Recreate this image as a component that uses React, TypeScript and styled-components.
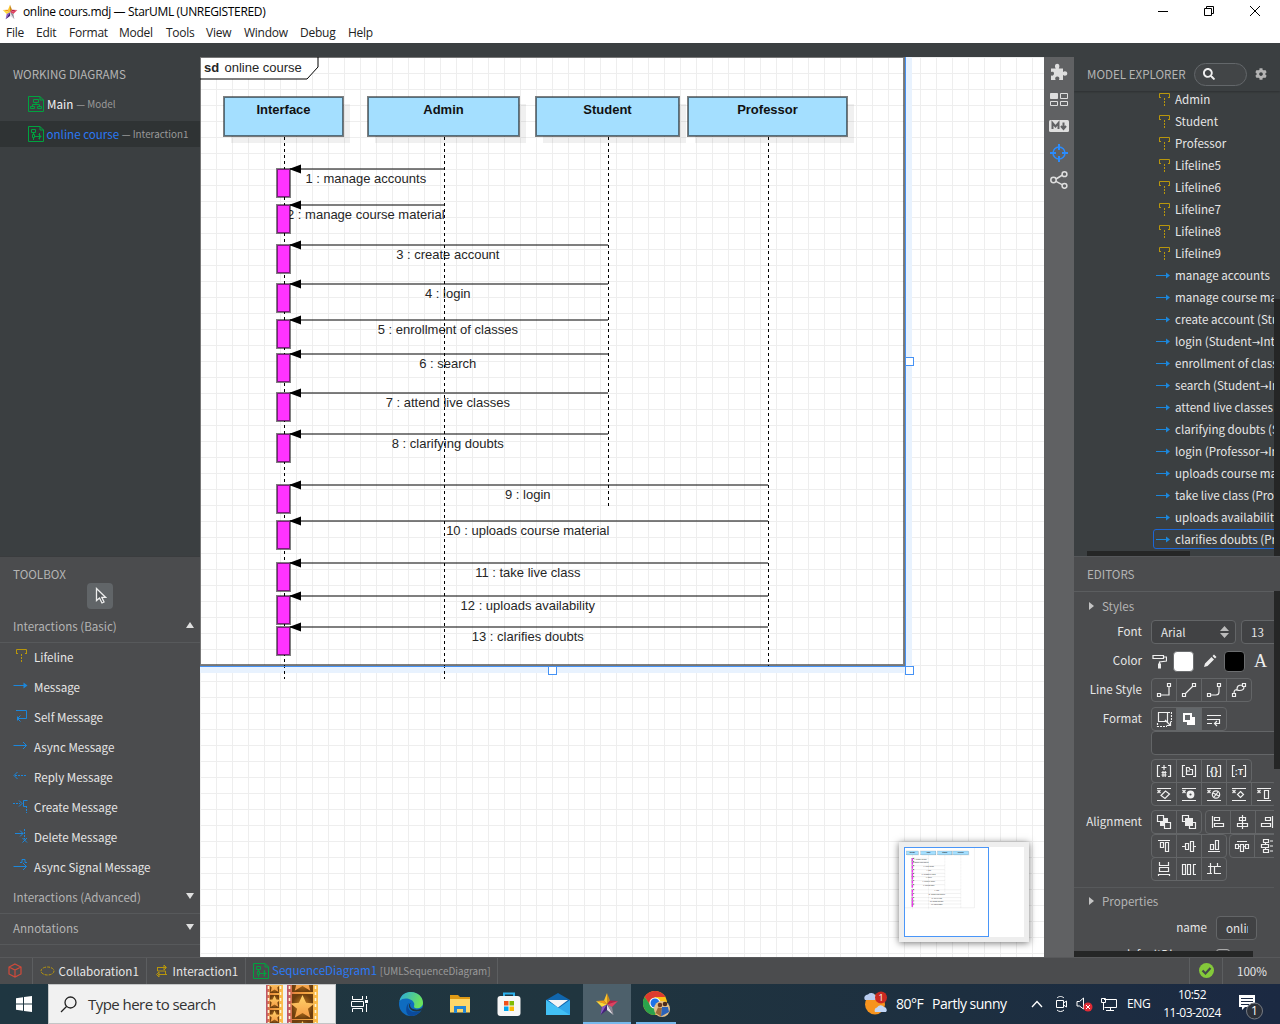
import React from "react";
import styled, { createGlobalStyle, css } from "styled-components";
import { FaSearch, FaCog } from "react-icons/fa";

const ui = `"Noto Sans CJK SC", "Open Sans", sans-serif`;
const segoe = `"Open Sans", "Noto Sans", sans-serif`;

const Global = createGlobalStyle`
  * { box-sizing: border-box; }
  body { margin: 0; background: #3b3f41; overflow: hidden; }
  svg { display: block; flex: none; }
`;

const Screen = styled.div`
  width: 1280px;
  height: 1024px;
  display: flex;
  flex-direction: column;
  overflow: hidden;
  font: 11.6px/20px ${ui};
  color: #e6e6e6;
  white-space: nowrap;
`;

/* ---------- window chrome ---------- */
const TitleBar = styled.header`
  height: 22px;
  display: flex;
  align-items: center;
  padding: 1px 20px 0 2px;
  background: #fff;
  color: #000;
  font: 12px/20px ${segoe};
  letter-spacing: -0.35px;
`;
const TitleText = styled.span`
  flex: 1;
  margin-left: 5px;
`;
const WindowButtons = styled.div`
  display: flex;
  gap: 36px;
  margin-top: -1px;
`;
const MenuBar = styled.nav`
  height: 21px;
  display: flex;
  background: #fff;
  color: #222;
  font: 12px/21px ${segoe};
`;
const MenuItem = styled.span<{ $w: number }>`
  width: ${(p) => p.$w}px;
  padding-left: 6px;
  letter-spacing: -0.25px;
`;
const Body = styled.main`
  height: 914px;
  padding-top: 14px;
  display: flex;
  background: #3b3f41;
`;

/* ---------- left ---------- */
const LeftBar = styled.aside`
  width: 200px;
  display: flex;
  flex-direction: column;
`;
const Working = styled.section`
  height: 499px;
`;
const PanelTitle = styled.h2`
  margin: 0;
  padding: 7px 0 0 13px;
  font: 11.6px/20px ${ui};
  color: #b4b4b4;
`;
const DiagramRow = styled.div<{ $on?: boolean }>`
  height: 26px;
  margin-top: ${(p) => (p.$on ? 4 : 7)}px;
  padding-left: 28px;
  display: flex;
  align-items: center;
  gap: ${(p) => (p.$on ? 2.5 : 3)}px;
  background: ${(p) => (p.$on ? "#2f3334" : "transparent")};
  color: ${(p) => (p.$on ? "#2a79f5" : "#f2f2f2")};
`;
const Dim = styled.small`
  font-size: 9.85px;
  color: #9a9a9a;
`;
const Toolbox = styled.section`
  height: 401px;
  background: #4b4c4e;
  border-top: 1px solid #3a3c3e;
`;
const SelectTool = styled.div`
  width: 26px;
  height: 26px;
  margin: -1px auto 0;
  border-radius: 4px;
  background: #616568;
  display: flex;
  align-items: center;
  justify-content: center;
`;
const Group = styled.div<{ $h: number; $pb: number }>`
  height: ${(p) => p.$h}px;
  padding: 0 6px ${(p) => p.$pb}px 13px;
  display: flex;
  align-items: center;
  justify-content: space-between;
  color: #b4b4b4;
  border-bottom: 1px solid #57595b;
`;
const Tri = styled.i<{ $dir: "up" | "down" | "right" }>`
  width: 0;
  height: 0;
  border: solid transparent;
  ${(p) =>
    p.$dir === "up"
      ? css`border-width: 0 4px 6px; border-bottom-color: #e0e0e0; margin-bottom: 2px;`
      : p.$dir === "down"
      ? css`border-width: 6px 4px 0; border-top-color: #e0e0e0; margin-bottom: 2px;`
      : css`border-width: 4px 0 4px 5px; border-left-color: #c4c4c4;`}
`;
const Tool = styled.div`
  height: 30px;
  padding: 0 0 2px 13px;
  display: flex;
  align-items: center;
  gap: 5px;
  svg { margin-top: -4px; }
`;
const ToolList = styled.div`
  height: 240px;
`;

/* ---------- canvas ---------- */
const Canvas = styled.section`
  width: 844px;
  position: relative;
  background-color: #fff;
  background-image: linear-gradient(to right, #eee 1px, transparent 1px), linear-gradient(#eee 1px, transparent 1px);
  background-size: 16px 16px;
`;
const MiniMap = styled.div`
  position: absolute;
  right: 15px;
  bottom: 15px;
  width: 130px;
  height: 100px;
  padding: 5px;
  background: #eee;
  box-shadow: 0 1px 7px rgba(0, 0, 0, 0.55);
`;

/* ---------- right ---------- */
const Strip = styled.div`
  width: 30px;
  padding-top: 6px;
  display: flex;
  flex-direction: column;
  align-items: center;
  gap: 9px;
  background: #606163;
  color: #dedede;
`;
const RightBar = styled.aside`
  width: 206px;
  display: flex;
  flex-direction: column;
`;
const Explorer = styled.section`
  height: 499px;
  position: relative;
  overflow: hidden;
`;
const ExplorerHead = styled.div`
  height: 34px;
  padding: 0 13px;
  display: flex;
  align-items: center;
  color: #b4b4b4;
  box-shadow: 0 1px 2px rgba(0, 0, 0, 0.25);
`;
const ExplorerTitle = styled.span`
  width: 107px;
`;
const SearchPill = styled.div`
  width: 53px;
  height: 23px;
  padding-left: 8px;
  margin-right: 8px;
  display: flex;
  align-items: center;
  border: 1px solid #63676a;
  border-radius: 12px;
  background: #424547;
  color: #f0f0f0;
`;
const Tree = styled.div`
  width: 200px;
  height: 461px;
  overflow: hidden;
  padding-left: 79px;
  & > :first-child { margin-top: -3px; }
`;
const TreeRow = styled.div<{ $on?: boolean }>`
  height: ${(p) => (p.$on ? 20 : 22)}px;
  margin-top: ${(p) => (p.$on ? 1 : 0)}px;
  width: 160px;
  padding-left: ${(p) => (p.$on ? 2 : 3)}px;
  display: flex;
  align-items: center;
  gap: 5px;
  border: ${(p) => (p.$on ? "1px solid #1b66d6" : "none")};
  border-radius: 3px;
`;
const Arrow = styled.span`
  font: 10px/10px "DejaVu Sans", sans-serif;
`;
const Thumb = styled.div<{ $x: number; $y: number; $w: number; $h: number }>`
  position: absolute;
  left: ${(p) => p.$x}px;
  top: ${(p) => p.$y}px;
  width: ${(p) => p.$w}px;
  height: ${(p) => p.$h}px;
  background: #252626;
`;
const Editors = styled.section`
  height: 401px;
  position: relative;
  overflow: hidden;
  background: #4b4c4e;
  border-top: 1px solid #55575a;
`;
const EditHead = styled.div`
  height: 35px;
  border-bottom: 1px solid #5b5d5f;
`;
const EditBody = styled.div`
  width: 200px;
  overflow: hidden;
`;
const SectionTitle = styled.div<{ $line?: boolean }>`
  height: 28px;
  padding: 0 0 1px 15px;
  display: flex;
  align-items: center;
  gap: 8px;
  color: #b4b4b4;
  margin-top: ${(p) => (p.$line ? 6 : 0)}px;
  border-top: ${(p) => (p.$line ? "1px solid #57595b" : "none")};
`;
const Field = styled.div<{ $h: number; $mt?: number; $label?: number }>`
  height: ${(p) => p.$h}px;
  margin-top: ${(p) => p.$mt ?? 0}px;
  display: grid;
  grid-template-columns: ${(p) => p.$label ?? 68}px auto;
  column-gap: 9px;
  justify-items: start;
  & > label {
    justify-self: end;
    line-height: ${(p) => p.$h - 2}px;
  }
`;
const Controls = styled.div<{ $gap?: number }>`
  display: flex;
  align-items: center;
  gap: ${(p) => p.$gap ?? 0}px;
`;
const Box = styled.div<{ $w: number }>`
  width: ${(p) => p.$w}px;
  height: 24px;
  padding: 0 4px 0 9px;
  display: flex;
  flex: none;
  align-items: center;
  justify-content: space-between;
  overflow: hidden;
  border: 1px solid #636567;
  border-radius: 4px;
  background: #414244;
`;
const Clip = styled.span`
  width: 22px;
  overflow: hidden;
`;
const Swatch = styled.div<{ $c: string }>`
  width: 21px;
  height: 21px;
  margin-right: 2px;
  border: 1px solid #6b6d6f;
  border-radius: 4px;
  background: ${(p) => p.$c};
`;
const Serif = styled.span`
  padding-left: 1px;
  font: 18px/20px "Liberation Serif", serif;
  color: #eee;
`;
const BtnGroup = styled.div`
  display: flex;
  flex: none;
  border: 1px solid #636567;
  border-radius: 4px;
  overflow: hidden;
`;
const Btn = styled.div<{ $on?: boolean }>`
  width: 24px;
  height: 22px;
  flex: none;
  display: flex;
  align-items: center;
  justify-content: center;
  background: ${(p) => (p.$on ? "#63676a" : "transparent")};
  & + & {
    width: 25px;
    border-left: 1px solid #636567;
  }
`;
const Check = styled.div`
  width: 14px;
  height: 14px;
  margin-top: 6px;
  border: 1px solid #aaa;
  border-radius: 3px;
`;

/* ---------- status ---------- */
const Status = styled.footer`
  height: 27px;
  display: flex;
  background: #4b4c4e;
  border-top: 1px solid #58595b;
`;
const Crumb = styled.div<{ $w: number; $c?: string; $pl?: number; $gap?: number }>`
  width: ${(p) => p.$w}px;
  padding: 0 0 1px ${(p) => p.$pl ?? 8}px;
  display: flex;
  align-items: center;
  gap: ${(p) => p.$gap ?? 4}px;
  border-right: 1px solid #5c5e60;
  color: ${(p) => p.$c ?? "#e6e6e6"};
`;
const Space = styled.div`
  flex: 1;
  border-right: 1px solid #5c5e60;
`;
const Zoom = styled.div`
  width: 57px;
  padding-left: 14px;
  line-height: 26px;
`;

/* ---------- taskbar ---------- */
const Taskbar = styled.div`
  height: 40px;
  display: flex;
  background: linear-gradient(90deg, #1f3641, #20353f 45%, #1d2f40 75%, #1b2942);
  color: #fff;
  font: 14px/20px ${segoe};
`;
const Start = styled.div`
  width: 48px;
  padding: 12px 0 0 16px;
`;
const SearchBox = styled.div`
  width: 288px;
  display: flex;
  align-items: center;
  padding-left: 11px;
  background: #f1f1f1;
  border: 1px solid #c4c6c7;
  color: #333;
  font-size: 15px;
  letter-spacing: -0.55px;
`;
const Hint = styled.span`
  width: 178px;
  margin-left: 11px;
`;
const Film = styled.div`
  display: flex;
  gap: 4px;
`;
const AppSlot = styled.div<{ $on?: boolean; $run?: boolean; $w?: number }>`
  width: ${(p) => p.$w ?? 49}px;
  height: 40px;
  display: flex;
  align-items: center;
  justify-content: center;
  background: ${(p) => (p.$on ? "#4d606b" : "transparent")};
  box-shadow: ${(p) => (p.$on || p.$run ? "inset 0 -2px #76b9ed" : "none")};
`;
const Tray = styled.div`
  flex: 1;
  display: flex;
  align-items: center;
  justify-content: flex-end;
`;
const TrayIcon = styled.span<{ $r: number }>`
  margin-right: ${(p) => p.$r}px;
`;
const TrayText = styled.span<{ $w: number; $ls?: number; $s?: number }>`
  width: ${(p) => p.$w}px;
  font-size: ${(p) => p.$s ?? 14}px;
  letter-spacing: ${(p) => p.$ls ?? -0.5}px;
`;
const Clock = styled.div`
  width: 66px;
  text-align: center;
  font-size: 12px;
  line-height: 18px;
  letter-spacing: -0.5px;
`;
const Note = styled.div`
  width: 55px;
  padding: 5px 0 0 13px;
`;

/* ---------- icons ---------- */
const StarLogo = ({ s }: { s: number }) => (
  <svg width={s} height={s} viewBox="0 0 24 24">
    <path d="M12 1L9 8.500L12 12.500Z" fill="#fbc32b" />
    <path d="M12 1L15 8.500L12 12.500Z" fill="#c98a1c" />
    <path d="M1 9L9 8.500L12 12.500Z" fill="#f39a14" />
    <path d="M1 9L12 12.500L7 15Z" fill="#fbd93a" />
    <path d="M23 9L15 8.500L12 12.500Z" fill="#b81f45" />
    <path d="M23 9L12 12.500L17 15Z" fill="#e0405f" />
    <path d="M5.500 23L7 15L12 12.500Z" fill="#8a55c4" />
    <path d="M5.500 23L12 18L12 12.500Z" fill="#43207a" />
    <path d="M18.500 23L12 18L12 12.500Z" fill="#e4dfe6" />
    <path d="M18.500 23L17 15L12 12.500Z" fill="#8c8692" />
  </svg>
);

const FileIcon = ({ seq }: { seq?: boolean }) => (
  <svg width="16" height="16" viewBox="0 0 16 16" fill="none" stroke="#00a33f" strokeWidth="1">
    <path d="M.5 .5H12L15.500 4V15.500H.5Z M12 .5V4H15.500" />
    {seq ? (
      <path d="M3.500 3.500H7.500V6.500H3.500Z M5.500 6.500V8.500 M4.500 8.500H6.500V11.500H4.500Z M5.500 12V14 M7 10.500H13 M10.500 8L13 10.500L10.500 13 M11.500 7V13.500" />
    ) : (
      <path d="M5.500 3.500H10.500V6.500H5.500Z M8 6.500V9 M4.500 11V8.500H11.500V11 M2.500 10.500H6.500V12.500H2.500Z M9.500 10.500H13.500V12.500H9.500Z" />
    )}
  </svg>
);

const LifelineIcon = ({ w = 16 }: { w?: number }) => (
  <svg width={w} height="16" viewBox={`0 0 ${w} 16`} fill="none" stroke="#b8960c">
    <path d="M3.500 7V2.500H13.500V7M3 6.500H5M12 6.500H14" />
    <path d="M8.500 7V15" strokeDasharray="2 1" />
  </svg>
);

const blue = "#1b87dc";
const MsgIcon = ({ kind }: { kind: string }) => (
  <svg width="16" height="16" viewBox="0 0 16 16" fill="none" stroke={blue}>
    {kind === "message" && (<><path d="M.5 8.500H12" /><path d="M10.500 5.500L14.500 8.500L10.500 11.500Z" fill={blue} stroke="none" /></>)}
    {kind === "self" && <path d="M3 3.500H13.500V11.500H5M7.500 8.500L4.500 11.500L7.500 14.500M4.500 9.500V13.500" />}
    {kind === "async" && <path d="M.5 8.500H13.500M10 5L13.500 8.500L10 12" />}
    {kind === "reply" && (<><path d="M4.500 5L1 8.500L4.500 12" /><path d="M2 8.500H14" strokeDasharray="2 1" /></>)}
    {kind === "create" && (<><path d="M0 6.500H7" strokeDasharray="2 1" /><path d="M6 3.500L9 6.500L6 9.500M14.500 3.500H10.500V9.500H14" /><path d="M13.500 9V16" strokeDasharray="2 1" /></>)}
    {kind === "delete" && (<><path d="M2 6.500H10M7 3.500L10 6.500L7 9.500M9.500 11L14 15.500M14 11L9.500 15.500" /><path d="M11.500 2V12" strokeDasharray="2 1" /></>)}
    {kind === "signal" && <path d="M.5 9.500H13.500M10 6L13.500 9.500L10 13M7 5.500H9V2.500H12V5.500H14" />}
  </svg>
);
const MsgIconSmall = () => (
  <svg width="14" height="16" viewBox="0 0 14 16">
    <path d="M0 8.500H11" stroke={blue} />
    <path d="M10 5.500L14 8.500L10 11.500Z" fill={blue} />
  </svg>
);

const E = ({ children, d }: { children?: React.ReactNode; d?: string }) => (
  <svg width="16" height="16" viewBox="0 0 16 16" fill="none" stroke="#f0f0f0" strokeWidth="1.200">
    {d && <path d={d} />}
    {children}
  </svg>
);
const glyph = { fill: "#ececec", stroke: "none", fontFamily: "Liberation Sans", fontWeight: 700, textAnchor: "middle" as const };
const Brackets = ({ children }: { children: React.ReactNode }) => (
  <E d="M4 2.500H1.500V13.500H4M12 2.500H14.500V13.500H12">{children}</E>
);
const Suppress = ({ children }: { children: React.ReactNode }) => (
  <E d="M1 2.500H15M1 14.500H15M1.500 4L4.500 7M4.500 4L1.500 7">{children}</E>
);

/* ---------- diagram ---------- */
const lifelines: [string, number, number, number, number][] = [
  ["Interface", 24, 119, 84, 622],
  ["Admin", 168, 151, 244, 622],
  ["Student", 336, 143, 408, 449],
  ["Professor", 488, 159, 568, 610],
];
const messages: [string, number, number][] = [
  ["manage accounts", 112, 244],
  ["manage course material", 148, 244],
  ["create account", 188, 408],
  ["login", 227, 408],
  ["enrollment of classes", 263, 408],
  ["search", 297, 408],
  ["attend live classes", 336, 408],
  ["clarifying doubts", 377, 408],
  ["login", 428, 568],
  ["uploads course material", 464, 568],
  ["take live class", 506, 568],
  ["uploads availability", 539, 568],
  ["clarifies doubts", 570, 568],
];
const line = { stroke: "#000", strokeWidth: 2, strokeOpacity: 0.5 };

const Diagram = ({ mini }: { mini?: boolean }) => (
  <g fontFamily="Liberation Sans, Arial, sans-serif" fontSize="13" fill="#262626">
    <path d="M0 0H704V608H0Z" fill="none" {...line} strokeOpacity={mini ? 0.3 : 0.5} />
    {!mini && (
      <>
        <path d="M1 1H118V10L107 22H1Z" fill="#fff" />
        <path d="M0 22H107M118 0V10" {...line} />
        <path d="M107 22L118 10" stroke="#000" />
        <text x="4" y="15" fontWeight="700">sd</text>
        <text x="24.500" y="15">online course</text>
      </>
    )}
    {lifelines.map(([name, x, w]) => (
      <g key={name}>
        <rect x={x + 7} y="47" width={w} height="39" fill="#000" fillOpacity=".06" />
        <rect x={x} y="40" width={w} height="39" fill="#a4dfff" {...line} />
        <text x={x + w / 2} y="57" textAnchor="middle" fontWeight="700" fill="#111">{name}</text>
      </g>
    ))}
    {messages.map(([t, y, x], i) => (
      <g key={i}>
        <path d={`M90 ${y}H${x}`} {...line} strokeOpacity={mini ? 0.3 : 0.5} />
        <path d={`M89 ${y}L101 ${y - 4.5}V${y + 4.5}Z`} fill="#000" />
        <text x={(x + 88) / 2 - 0.2} y={y + 14} textAnchor="middle">{`${i + 1} : ${t}`}</text>
      </g>
    ))}
    {lifelines.map(([name, , , x, end]) => (
      <path key={name} d={`M${x + 0.5} 80V${end}`} stroke="#000" strokeDasharray="3 3" />
    ))}
    {messages.map(([, y], i) => (
      <rect key={i} x="77" y={y} width="13" height="28" fill="#ff33ff" {...line} />
    ))}
  </g>
);

const Edge = () => (
  <svg width="26" height="26" viewBox="0 0 26 26">
    <defs>
      <linearGradient id="edgeTop" x1="0" y1="0" x2="1" y2=".3"><stop offset="0" stopColor="#2aa9e0" /><stop offset="1" stopColor="#6be35c" /></linearGradient>
    </defs>
    <circle cx="13" cy="13" r="12" fill="#0f6cc0" />
    <path d="M1.500 10C3 3 8 1 13 1C20 1 25 6 25 12C25 16 21 18 17 17C15 16 17 14 16 12C14 7 5 6 1.500 10Z" fill="url(#edgeTop)" />
    <path d="M11 12C8 16 12 22 18 21C20 21 23 19 24 18C21 23 17 25 13 25C6 24 8 13 11 12Z" fill="#0b4a9b" />
    <path d="M13 11.500C11 13 12 18 17 18.500C20 19 23 18 25 16.500L23.500 19C20 21.500 13 21 11 16C10.500 14 11.500 12 13 11.500Z" fill="#1f3641" />
  </svg>
);
const FilmStrip = ({ w }: { w: number }) => {
  const big = w > 20;
  const id = big ? "filmBig" : "filmSmall";
  return (
    <svg width={w} height="38" viewBox={`0 0 ${w} 38`}>
      <defs>
        <linearGradient id={id}><stop offset="0" stopColor="#b9506e" /><stop offset=".25" stopColor="#e98b3c" /><stop offset="1" stopColor="#fcbf4a" /></linearGradient>
        <radialGradient id={`${id}Cell`}><stop offset="0" stopColor="#d98a24" /><stop offset="1" stopColor="#6e3f0e" /></radialGradient>
        <linearGradient id={`${id}Star`} x2="0" y2="1"><stop offset="0" stopColor="#ffd56a" /><stop offset="1" stopColor="#f59a45" /></linearGradient>
      </defs>
      <rect width={w} height="38" fill={`url(#${id})`} />
      <path d={`M2.500 1V38M${w - 2.5} 1V38`} stroke="#fff4cf" strokeWidth="1.600" strokeDasharray="3 3" />
      {(big ? [-18, 9, 35] : [-5, 10, 25]).map((y) => (
        <g key={y}>
          <rect x={big ? 5 : 4} y={y} width={w - (big ? 10 : 8)} height={big ? 25 : 13} fill={`url(#${id}Cell)`} />
          <path
            transform={`translate(${w / 2} ${y + (big ? 13 : 6.5)}) scale(${big ? 1.2 : 0.6})`}
            d="M0-10L3-3.500L10-3L4.500 1.500L6.500 9L0 5L-6.500 9L-4.500 1.500L-10-3L-3-3.500Z"
            fill={`url(#${id}Star)`}
          />
        </g>
      ))}
    </svg>
  );
};

const menu: [string, number][] = [["File", 30], ["Edit", 33], ["Format", 50], ["Model", 47], ["Tools", 40], ["View", 38], ["Window", 56], ["Debug", 48], ["Help", 40]];
const tools = [["Message", "message"], ["Self Message", "self"], ["Async Message", "async"], ["Reply Message", "reply"], ["Create Message", "create"], ["Delete Message", "delete"], ["Async Signal Message", "signal"]];
const tree = ["Admin", "Student", "Professor", "Lifeline5", "Lifeline6", "Lifeline7", "Lifeline8", "Lifeline9"];
const treeMsgs = [
  "manage accounts", "manage course material", "create account (Student→Interface)", "login (Student→Interface)",
  "enrollment of classes", "search (Student→Interface)", "attend live classes", "clarifying doubts (Student)",
  "login (Professor→Interface)", "uploads course material", "take live class (Professor)", "uploads availability", "clarifies doubts (Professor)",
];
const TreeLabel = ({ text }: { text: string }) => {
  const [from, to] = text.split("→");
  return <span>{from}{to && <><Arrow>→</Arrow>{to}</>}</span>;
};

export default function App() {
  return (
    <Screen>
      <Global />
      <TitleBar>
        <StarLogo s={16} />
        <TitleText>online cours.mdj — StarUML (UNREGISTERED)</TitleText>
        <WindowButtons>
          <svg width="10" height="11"><path d="M0 5.500H10" stroke="#000" /></svg>
          <svg width="10" height="11" fill="none" stroke="#000"><path d="M.5 2.500H7.500V9.500H.5ZM2.500 2V.5H9.500V7.500H8" /></svg>
          <svg width="10" height="11"><path d="M0 0L10 10M10 0L0 10" stroke="#000" /></svg>
        </WindowButtons>
      </TitleBar>
      <MenuBar>
        {menu.map(([m, w]) => <MenuItem key={m} $w={w}>{m}</MenuItem>)}
      </MenuBar>

      <Body>
        <LeftBar>
          <Working>
            <PanelTitle>WORKING DIAGRAMS</PanelTitle>
            <DiagramRow><FileIcon /><span>Main</span><Dim>— Model</Dim></DiagramRow>
            <DiagramRow $on><FileIcon seq /><span>online course</span><Dim>— Interaction1</Dim></DiagramRow>
          </Working>
          <Toolbox>
            <PanelTitle>TOOLBOX</PanelTitle>
            <SelectTool>
              <svg width="14" height="18" viewBox="0 0 14 18"><path d="M3.500 1.500V13.500L6.500 11L9 16L11 15L8.800 10.300H12.500Z" fill="#55595c" stroke="#eee" strokeWidth="1.300" /></svg>
            </SelectTool>
            <Group $h={34} $pb={0}>Interactions (Basic)<Tri $dir="up" /></Group>
            <ToolList>
              <Tool><LifelineIcon />Lifeline</Tool>
              {tools.map(([t, k]) => <Tool key={k}><MsgIcon kind={k} />{t}</Tool>)}
            </ToolList>
            <Group $h={31} $pb={2}>Interactions (Advanced)<Tri $dir="down" /></Group>
            <Group $h={31} $pb={2}>Annotations<Tri $dir="down" /></Group>
          </Toolbox>
        </LeftBar>

        <Canvas>
          <svg width="844" height="900" viewBox="0 0 844 900">
            <path d="M706 0H712V616H0V610H706Z" fill="#e8f2fe" />
            <Diagram />
            <path d="M705.500 0V609.500H0" fill="none" stroke="#4592f5" />
            {[[705, 301], [348, 610], [705, 610]].map(([x, y]) => (
              <rect key={`${x}-${y}`} x={x + 0.5} y={y - 0.5} width="8" height="8" fill="#fff" stroke="#4592f5" />
            ))}
          </svg>
          <MiniMap>
            <svg width="120" height="90" viewBox="0 0 120 90">
              <rect width="120" height="90" fill="#fff" />
              <g transform="scale(.1)"><Diagram mini /></g>
              <rect x=".5" y=".5" width="84" height="89" fill="none" stroke="#4a96f8" />
            </svg>
          </MiniMap>
        </Canvas>

        <Strip>
          <svg width="18" height="18" viewBox="0 0 18 18" fill="#dedede"><path d="M1 5.500H5.800C4.400 3.800 4.800 .8 7.200 .8S10 3.800 8.700 5.500H13V9C14.500 7.700 17.300 8.200 17.300 10.500S14.500 13.300 13 12V17H9C10 15 9 13.500 7.300 13.500S4.500 15 5.600 17H1V12.500C3 13 4 12 4 10.500S3 8.300 1 9Z" /></svg>
          <svg width="18" height="18" viewBox="0 0 18 18" fill="none" stroke="#dedede"><path d="M.5 3.500H7.500V8.500H.5Z" fill="#dedede" /><path d="M10.500 3.500H17.500V8.500H10.500ZM.5 11.500H7.500V15.500H.5ZM10.500 11.500H17.500V15.500H10.500Z" /></svg>
          <svg width="20" height="18" viewBox="0 0 20 18"><rect y="3" width="20" height="12" rx="1.500" fill="#dedede" /><path d="M3.500 12V6L6.500 9.500L9.500 6V12M14.500 5.500V11M12 9L14.500 12L17 9" fill="none" stroke="#606163" strokeWidth="2" /></svg>
          <svg width="18" height="18" viewBox="0 0 18 18" fill="none" stroke="#2a8cff" strokeWidth="1.500"><circle cx="9" cy="9" r="6" /><path d="M9 0V6M9 12V18M0 9H6M12 9H18" strokeWidth="2" /></svg>
          <svg width="18" height="18" viewBox="0 0 18 18" fill="none" stroke="#dedede" strokeWidth="1.500"><circle cx="3.500" cy="9" r="2.700" /><circle cx="14.500" cy="3.200" r="2.400" /><circle cx="14.500" cy="14.800" r="2.400" /><path d="M6 8L12.500 4M6 10.300L12.500 13.800" /></svg>
        </Strip>

        <RightBar>
          <Explorer>
            <ExplorerHead>
              <ExplorerTitle>MODEL EXPLORER</ExplorerTitle>
              <SearchPill><FaSearch size={12} /></SearchPill>
              <FaCog size={12} />
            </ExplorerHead>
            <Tree>
              {tree.map((t) => <TreeRow key={t}><LifelineIcon w={14} />{t}</TreeRow>)}
              {treeMsgs.map((t, i) => <TreeRow key={t} $on={i === 12}><MsgIconSmall /><TreeLabel text={t} /></TreeRow>)}
            </Tree>
            <Thumb $x={200} $y={242} $w={6} $h={258} />
            <Thumb $x={13} $y={494} $w={103} $h={6} />
          </Explorer>
          <Editors>
            <EditHead><PanelTitle>EDITORS</PanelTitle></EditHead>
            <EditBody>
              <SectionTitle><Tri $dir="right" />Styles</SectionTitle>
              <Field $h={24}>
                <label>Font</label>
                <Controls $gap={5}>
                  <Box $w={85}>Arial<svg width="11" height="12"><path d="M0 5L4.500 0L9 5ZM0 7L4.500 12L9 7Z" fill="#bbb" /></svg></Box>
                  <Box $w={45}>13</Box>
                </Controls>
              </Field>
              <Field $h={28} $mt={3}>
                <label>Color</label>
                <Controls $gap={6}>
                  <E><path d="M2 2.500H12.500V5.500H2ZM13 4H15.500V8L8.500 9V11" /><path d="M7 10.500H10V15.500H7Z" fill="#ececec" stroke="none" /></E>
                  <Swatch $c="#fff" />
                  <E><path d="M2 14L3 10.500L9.500 4L12 6.500L5.500 13ZM10.500 3L12 1.500L14.500 4L13 5.500Z" fill="#ececec" stroke="none" /></E>
                  <Swatch $c="#000" />
                  <Serif>A</Serif>
                </Controls>
              </Field>
              <Field $h={24} $mt={3}>
                <label>Line Style</label>
                <BtnGroup>
                  <Btn><E d="M1.500 11.500H4.500V14.500H1.500ZM11.500 1.500H14.500V4.500H11.500ZM4.500 13H13V4.500" /></Btn>
                  <Btn><E d="M1.500 11.500H4.500V14.500H1.500ZM11.500 1.500H14.500V4.500H11.500ZM4.500 11.500L11.500 4.500" /></Btn>
                  <Btn><E d="M1.500 11.500H4.500V14.500H1.500ZM11.500 1.500H14.500V4.500H11.500ZM4.500 13H10C12 13 13 12 13 10V4.500" /></Btn>
                  <Btn><E d="M1.500 11.500H4.500V14.500H1.500ZM11.500 1.500H14.500V4.500H11.500ZM3 11.500C3 6 5.500 8.500 8.500 8.500S13 8 13 4.500M11.500 3C7 3 6 4 6 7.500" /></Btn>
                </BtnGroup>
              </Field>
              <Field $h={24} $mt={5}>
                <label>Format</label>
                <BtnGroup>
                  <Btn><E><path d="M2.500 1.500H11.500V10.500H2.500ZM9 9L14 14M14.500 10.500V14.500H10.500" /><path d="M12 1.500H15.500V11M1.500 12V15.500H11" strokeDasharray="2 1" /></E></Btn>
                  <Btn $on><E><path d="M6 6H14V14H6Z" fill="#fff" stroke="none" /><path d="M3 3H10V10H3Z" fill="#63676a" stroke="#fff" strokeWidth="2" /></E></Btn>
                  <Btn><E d="M1 4.500H15M1 8.500H13.500V12.500H9M11 10L8.500 12.500L11 15M1 12.500H6" /></Btn>
                </BtnGroup>
              </Field>
              <Field $h={24}><span /><Box $w={140} /></Field>
              <Field $h={24} $mt={4}>
                <span />
                <BtnGroup>
                  <Btn><Brackets><path d="M8 2V7M5.500 4.500H10.500M5.500 9.500H10.500M5.500 12H10.500M7 8V14M9.200 8V14" /></Brackets></Btn>
                  <Btn><Brackets><path d="M5.500 11.500V4.500H8L9 6.500H11.500V11.500ZM5.500 8H9" /></Brackets></Btn>
                  <Btn><Brackets><text x="8" y="11.500" fontSize="10" {...glyph}>{"{}"}</text></Brackets></Btn>
                  <Btn><Brackets><text x="8" y="11.500" fontSize="9" {...glyph}>:T</text></Brackets></Btn>
                </BtnGroup>
              </Field>
              <Field $h={24} $mt={-1}>
                <span />
                <BtnGroup>
                  <Btn><Suppress><path d="M5 9.500L9.500 5L13.500 8L9 12.500Z" /></Suppress></Btn>
                  <Btn><Suppress><circle cx="9.500" cy="8.500" r="2.500" strokeWidth="2.800" /></Suppress></Btn>
                  <Btn><Suppress><circle cx="10" cy="8.500" r="3.700" /><path d="M7 7L13 10M8 11L12 6" /></Suppress></Btn>
                  <Btn><Suppress><path d="M9.500 5.500L12.500 8.500L9.500 11.500L6.500 8.500Z" /></Suppress></Btn>
                  <Btn><Suppress><path d="M8.500 4.500H12.500V12.500H8.500Z" /></Suppress></Btn>
                </BtnGroup>
              </Field>
              <Field $h={24} $mt={4}>
                <label>Alignment</label>
                <Controls $gap={3}>
                  <BtnGroup>
                    <Btn><E><path d="M4 4H12V12H4Z" fill="#ececec" stroke="none" /><path d="M1.500 1.500H7.500V7.500H1.500ZM8.500 8.500H14.500V14.500H8.500Z" fill="#4b4c4e" /></E></Btn>
                    <Btn><E><path d="M1.500 1.500H7.500V7.500H1.500ZM8.500 8.500H14.500V14.500H8.500Z" /><path d="M4 4H12V12H4Z" fill="#ececec" stroke="none" /></E></Btn>
                  </BtnGroup>
                  <BtnGroup>
                    <Btn><E d="M2.500 2V14M4.500 3.500H9.500V6.500H4.500ZM4.500 9.500H13.500V12.500H4.500Z" /></Btn>
                    <Btn><E d="M7.500 1V15M4.500 3.500H10.500V6.500H4.500ZM2.500 9.500H12.500V12.500H2.500Z" /></Btn>
                    <Btn><E d="M12.500 2V14M5.500 3.500H10.500V6.500H5.500ZM1.500 9.500H10.500V12.500H1.500Z" /></Btn>
                  </BtnGroup>
                </Controls>
              </Field>
              <Field $h={24}>
                <span />
                <Controls $gap={2}>
                  <BtnGroup>
                    <Btn><E d="M2 2.500H14M4.500 4.500H7.500V9.500H4.500ZM9.500 4.500H12.500V13.500H9.500Z" /></Btn>
                    <Btn><E d="M1 8.500H4M13 8.500H15M4.500 5.500H7.500V11.500H4.500ZM9.500 3.500H12.500V13.500H9.500Z" /></Btn>
                    <Btn><E d="M2 13.500H14M4.500 6.500H7.500V11.500H4.500ZM9.500 2.500H12.500V11.500H9.500Z" /></Btn>
                  </BtnGroup>
                  <BtnGroup>
                    <Btn><E d="M1.500 6.500H4.500V10.500H1.500ZM6.500 6.500H9.500V13.500H6.500ZM11.500 6.500H14.500V10.500H11.500ZM4.500 8.500H6.500M9.500 8.500H11.500M3 3.500H13" /></Btn>
                    <Btn><E d="M4.500 1.500H9.500V4.500H4.500ZM2.500 6.500H9.500V9.500H2.500ZM4.500 11.500H9.500V14.500H4.500ZM6.500 4.500V6.500M6.500 9.500V11.500M11 3H14M11 8H14M11 13H14" /></Btn>
                  </BtnGroup>
                </Controls>
              </Field>
              <Field $h={24} $mt={-1}>
                <span />
                <BtnGroup>
                  <Btn><E d="M3.500 1V4.500H12.500V1M3.500 6.500H12.500V10.500H3.500ZM2.500 15V13.500H13.500V15" /></Btn>
                  <Btn><E d="M1.500 3.500H4.500V13.500H1.500ZM6.500 3.500H9.500V13.500H6.500ZM15 3.500H12.500V13.500H15" /></Btn>
                  <Btn><E d="M4.500 2V12.500M2 5.500H15M11.500 2V5.500M1 12.500H6M15 12.500H8.500V5.500" /></Btn>
                </BtnGroup>
              </Field>
              <SectionTitle $line><Tri $dir="right" />Properties</SectionTitle>
              <Field $h={24} $mt={1} $label={133}><label>name</label><Box $w={41}><Clip>online course</Clip></Box></Field>
              <Field $h={24} $mt={3} $label={133}><label>defaultDiagram</label><Check /></Field>
            </EditBody>
            <Thumb $x={200} $y={34} $w={6} $h={178} />
            <Thumb $x={0} $y={394} $w={179} $h={6} />
          </Editors>
        </RightBar>
      </Body>

      <Status>
        <Crumb $w={33}>
          <svg width="14" height="15" viewBox="0 0 14 15" fill="none" stroke="#d04a3a" strokeWidth="1.200"><path d="M7 1L13 4V11L7 14L1 11V4ZM1 4L7 7L13 4M7 7V14" /></svg>
        </Crumb>
        <Crumb $w={114} $pl={7} $gap={3.5}>
          <svg width="15" height="10"><ellipse cx="7.500" cy="5" rx="6.500" ry="4" fill="none" stroke="#b8960c" strokeDasharray="3 1" /></svg>
          Collaboration1
        </Crumb>
        <Crumb $w={99} $gap={4.5}>
          <svg width="13" height="12" fill="none" stroke="#b8960c"><path d="M2 2.500H11M9 0V5L11.500 2.500ZM2.500 6H10.500M3 9.500H12M4 7V12L1.500 9.500ZM2.500 2V6M10.500 6V9" /></svg>
          Interaction1
        </Crumb>
        <Crumb $w={252} $c="#2a79f5" $pl={7} $gap={3}><FileIcon seq /><span>SequenceDiagram1 <Dim>[UMLSequenceDiagram]</Dim></span></Crumb>
        <Space />
        <Crumb $w={33} $pl={9}>
          <svg width="15" height="15" viewBox="0 0 15 15"><circle cx="7.500" cy="7.500" r="7.500" fill="#84c93a" /><path d="M3.500 7.500L6.500 10.500L11.500 5" fill="none" stroke="#44484a" strokeWidth="2.200" /></svg>
        </Crumb>
        <Zoom>100%</Zoom>
      </Status>

      <Taskbar>
        <Start><svg width="16" height="16" fill="#fff"><path d="M0 2.300L7 1.200V7.500H0ZM8 1L16 0V7.500H8ZM0 8.500H7V14.800L0 13.700ZM8 8.500H16V16L8 15Z" /></svg></Start>
        <SearchBox>
          <svg width="17" height="17" fill="none" stroke="#222" strokeWidth="1.300"><circle cx="10.500" cy="6.500" r="5.500" /><path d="M6.500 10.500L1 16" /></svg>
          <Hint>Type here to search</Hint>
          <Film><FilmStrip w={17} /><FilmStrip w={31} /></Film>
        </SearchBox>
        <AppSlot $w={50}>
          <svg width="20" height="16" fill="none" stroke="#fff"><path d="M1.500 0V3.500H11.500V0M1.500 16V12.500H11.500V16M.5 5.500H12.500V10.500H.5ZM15.500 0V3M15.500 8V16" /><path d="M14 4H17V7H14Z" fill="#fff" stroke="none" /></svg>
        </AppSlot>
        <AppSlot><Edge /></AppSlot>
        <AppSlot>
          <svg width="22" height="20"><path d="M1 1H9L11 3H21V18H1Z" fill="#e09a14" /><path d="M1 5H21V18.500H1Z" fill="#ffd768" /><path d="M5 19V12H17V19H14V15H8V19Z" fill="#2586d3" /></svg>
        </AppSlot>
        <AppSlot>
          <svg width="24" height="24"><path d="M7 5V1.500H17V5" fill="none" stroke="#2cb1ec" strokeWidth="2" /><rect x=".5" y="4" width="23" height="20" rx="3" fill="#f6f6f6" /><path d="M7 9H11.500V13.500H7Z" fill="#f1511b" /><path d="M12.500 9H17V13.500H12.500Z" fill="#80bb01" /><path d="M7 14.500H11.500V19H7Z" fill="#00a4ef" /><path d="M12.500 14.500H17V19H12.500Z" fill="#fbb902" /></svg>
        </AppSlot>
        <AppSlot $w={50}>
          <svg width="24" height="22"><path d="M0 7L12 0L24 7V22H0Z" fill="#1066ad" /><path d="M0 7L12 15.500L24 7V22H0Z" fill="#2fa7ea" /><path d="M0 7V22H24Z" fill="#42c0f5" /><path d="M2 7H22L12 14.500Z" fill="#f2f4f6" /></svg>
        </AppSlot>
        <AppSlot $on $w={48}><StarLogo s={24} /></AppSlot>
        <AppSlot $w={5} />
        <AppSlot $run $w={40}>
          <svg width="27" height="26" viewBox="0 0 27 26">
            <circle cx="12" cy="12" r="12" fill="#fbc116" />
            <path d="M1.600 6A12 12 0 0 1 22.400 6H12L7 14Z" fill="#dd3b2f" />
            <path d="M1.600 6A12 12 0 0 0 12 24L16 16L8 15Z" fill="#2ba24c" />
            <circle cx="12" cy="12" r="5.600" fill="#fff" /><circle cx="12" cy="12" r="4.500" fill="#1b72e8" />
            <circle cx="19" cy="18" r="8" fill="#e2c08c" />
            <circle cx="17" cy="14" r="2.300" fill="#6b3a22" /><circle cx="22" cy="13" r="2.300" fill="#4a2a1c" />
            <path d="M12.500 22L15 16.500L19 17L18 25.500Z" fill="#a06a3a" /><path d="M18 25.500L19 16H25L26 21Z" fill="#2b62b8" />
          </svg>
        </AppSlot>
        <Tray>
          <TrayIcon $r={7}>
            <svg width="26" height="26" viewBox="0 0 26 26">
              <circle cx="12" cy="13.500" r="10" fill="#f7941e" />
              <path d="M2 9A3.500 3.500 0 0 1 5 3.500A4.500 4.500 0 0 1 12 4A3 3 0 0 1 12 9Z" fill="#b9cdf0" />
              <path d="M12 21A3 3 0 0 1 14 16.500A4 4 0 0 1 21 16A3 3 0 0 1 23 21Z" fill="#c3d7f6" />
              <circle cx="18" cy="6.500" r="6" fill="#cb2a21" />
              <text x="18" y="10" fontSize="9" fill="#fff" textAnchor="middle" fontFamily="Open Sans">1</text>
            </svg>
          </TrayIcon>
          <TrayText $w={36}>80°F</TrayText>
          <TrayText $w={99}>Partly sunny</TrayText>
          <TrayIcon $r={12}><svg width="12" height="8" fill="none" stroke="#fff" strokeWidth="1.300"><path d="M1 7L6 1.500L11 7" /></svg></TrayIcon>
          <TrayIcon $r={9}><svg width="12" height="16" fill="none" stroke="#fff"><path d="M1.500 4.500H8.500V11.500H1.500ZM8.500 7L11.500 5V11L8.500 9M2 2C4 0 7 0 9 2M2 14C4 16 7 16 9 14" /></svg></TrayIcon>
          <TrayIcon $r={6}><svg width="18" height="16" fill="none" stroke="#fff"><path d="M1 5.500H3.500L7.500 2V13L3.500 10H1Z" /><circle cx="12" cy="11" r="4.500" fill="#e02b35" stroke="none" /><path d="M10 9L14 13M14 9L10 13" /></svg></TrayIcon>
          <TrayIcon $r={9}><svg width="18" height="15" fill="none" stroke="#fff"><path d="M4 2.500H16.500V10.500H4.500M10.500 10.500V13.500M6 13.500H14M1.500 1.500H5.500V5.500H1.500ZM3.500 6V13" /></svg></TrayIcon>
          <TrayText $w={32} $s={12} $ls={-0.3}>ENG</TrayText>
          <Clock>10:52<br />11-03-2024</Clock>
          <Note>
            <svg width="26" height="26" viewBox="0 0 26 26">
              <path d="M1 1H17V13H7L4 16V13H1Z" fill="#fff" /><path d="M3 4.500H15M3 7.500H15M3 10.500H11" stroke="#1b2942" />
              <circle cx="16.500" cy="17" r="8" fill="#2c3038" stroke="#777c84" />
              <text x="16.500" y="21" fontSize="12" fill="#fff" textAnchor="middle" fontFamily="Open Sans">1</text>
            </svg>
          </Note>
        </Tray>
      </Taskbar>
    </Screen>
  );
}
